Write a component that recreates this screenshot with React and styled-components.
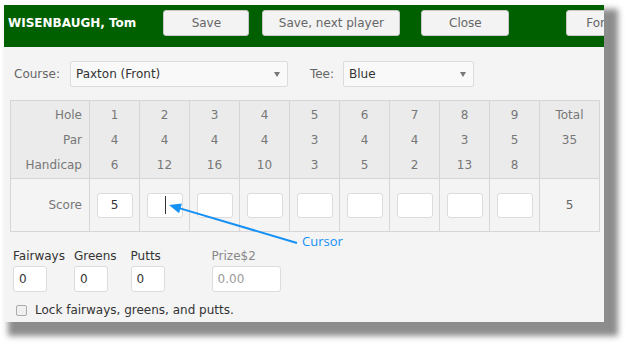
import styled, { createGlobalStyle } from "styled-components";

const GlobalStyle = createGlobalStyle`
    html, body {
        margin: 0;
        padding: 0;
        background: #ffffff;
    }
    body {
        font-family: "DejaVu Sans", Verdana, sans-serif;
        font-size: 12px;
        color: #333;
    }
`;

const Page = styled.div`
    padding: 5px 0 0 4px;
    width: 626px;
    height: 344px;
    box-sizing: border-box;
`;

const Window = styled.div`
    position: relative;
    width: 600px;
    height: 317px;
    background: #f4f4f4;
    overflow: hidden;
    box-shadow: 9px 9px 6px 5px rgba(0, 0, 0, 0.45);
`;

const Header = styled.div`
    display: flex;
    align-items: flex-start;
    height: 42px;
    box-sizing: border-box;
    padding: 5px 0 0 4px;
    background: #006000;
    white-space: nowrap;
    overflow: hidden;
`;

const PlayerName = styled.div`
    height: 26px;
    line-height: 26px;
    color: #ffffff;
    font-weight: bold;
    font-size: 12px;
`;

const HeaderButton = styled.div`
    flex: none;
    width: ${(p) => p.$w}px;
    height: 26px;
    margin-left: ${(p) => p.$ml}px;
    box-sizing: border-box;
    border: 1px solid #c8c8c8;
    border-radius: 3px;
    background: #f3f3f3;
    color: #666;
    font-size: 12px;
    line-height: 24px;
    text-align: center;
`;

const Content = styled.div`
    padding: 14px 6px 0 6px;
`;

const SelectRow = styled.div`
    display: flex;
    align-items: center;
    height: 26px;
`;

const FieldLabel = styled.span`
    color: #666;
    margin-left: ${(p) => p.$ml}px;
    margin-right: ${(p) => p.$mr}px;
`;

const FakeSelect = styled.div`
    position: relative;
    width: ${(p) => p.$w}px;
    height: 26px;
    box-sizing: border-box;
    border: 1px solid #dcdcdc;
    border-radius: 2px;
    background: #f9f9f9;
    padding-left: 5px;
    line-height: 24px;
    color: #333;

    &::after {
        content: "";
        position: absolute;
        right: 7px;
        top: 10px;
        border-left: 3px solid transparent;
        border-right: 3px solid transparent;
        border-top: 5px solid #777;
    }
`;

const Grid = styled.table`
    margin-top: 13px;
    width: 589px;
    table-layout: fixed;
    border-collapse: collapse;
    border: 1px solid #d6d6d6;
    color: #777;
    font-size: 12px;
`;

const HeadRow = styled.tr`
    background: #ebebeb;
    height: ${(p) => p.$h}px;
`;

const ScoreRow = styled.tr`
    background: #f4f4f4;
    height: 53px;
    border-top: 1px solid #d6d6d6;
`;

const Cell = styled.td`
    padding: 0;
    border-left: 1px solid #d6d6d6;
    text-align: center;
    vertical-align: middle;
    padding-top: ${(p) => p.$pt || 0}px;
`;

const RowLabel = styled(Cell)`
    text-align: right;
    padding-right: 7px;
`;

const ScoreWrap = styled.div`
    position: relative;
    width: 36px;
    height: 25px;
    margin: 0 auto;
`;

const ScoreInput = styled.input`
    display: block;
    width: 36px;
    height: 25px;
    box-sizing: border-box;
    border: 1px solid #dcdcdc;
    border-radius: 3px;
    background: #ffffff;
    padding: 0;
    text-align: center;
    font-family: "DejaVu Sans", Verdana, sans-serif;
    font-size: 12px;
    color: #333;
    outline: none;
`;

const Caret = styled.span`
    position: absolute;
    left: 18px;
    top: 3px;
    width: 1px;
    height: 18px;
    background: #333;
`;

const Extras = styled.div`
    display: flex;
    margin-top: 17px;
`;

const ExtraField = styled.div`
    display: flex;
    flex-direction: column;
    margin-left: ${(p) => p.$ml}px;
    margin-right: ${(p) => p.$mr}px;
`;

const ExtraLabel = styled.span`
    height: 15px;
    line-height: 15px;
    color: ${(p) => (p.$muted ? "#888" : "#333")};
    white-space: nowrap;
`;

const ExtraInput = styled.input`
    width: ${(p) => p.$w}px;
    height: 26px;
    margin-top: 2px;
    box-sizing: border-box;
    border: 1px solid #dcdcdc;
    border-radius: 3px;
    background: #ffffff;
    padding: 0 5px;
    font-family: "DejaVu Sans", Verdana, sans-serif;
    font-size: 12px;
    color: #333;
    outline: none;

    &::placeholder {
        color: #999;
    }
`;

const LockRow = styled.label`
    display: flex;
    align-items: center;
    margin-top: 10px;
    padding-left: 6px;
    height: 16px;
    color: #333;
`;

const Box = styled.span`
    width: 11px;
    height: 11px;
    box-sizing: border-box;
    border: 1px solid #aaa;
    border-radius: 2px;
    background: #f0f0f0;
    margin-right: 8px;
`;

const Annotation = styled.svg`
    position: absolute;
    left: 0;
    top: 0;
    pointer-events: none;
`;

const Callout = styled.span`
    position: absolute;
    left: 298px;
    top: 227px;
    font-family: "Open Sans", sans-serif;
    font-size: 13px;
    color: #1590f5;
`;

const holes = [
    { hole: 1, par: 4, hcp: 6 },
    { hole: 2, par: 4, hcp: 12 },
    { hole: 3, par: 4, hcp: 16 },
    { hole: 4, par: 4, hcp: 10 },
    { hole: 5, par: 3, hcp: 3 },
    { hole: 6, par: 4, hcp: 5 },
    { hole: 7, par: 4, hcp: 2 },
    { hole: 8, par: 3, hcp: 13 },
    { hole: 9, par: 5, hcp: 8 },
];

const App = () => {
    return (
        <Page>
            <GlobalStyle />
            <Window>
                <Header>
                    <PlayerName>WISENBAUGH, Tom</PlayerName>
                    <HeaderButton $w={86} $ml={27}>Save</HeaderButton>
                    <HeaderButton $w={138} $ml={13}>Save, next player</HeaderButton>
                    <HeaderButton $w={88} $ml={21}>Close</HeaderButton>
                    <HeaderButton $w={88} $ml={57}>Forward</HeaderButton>
                </Header>

                <Content>
                    <SelectRow>
                        <FieldLabel $ml={4} $mr={10}>Course:</FieldLabel>
                        <FakeSelect $w={218}>Paxton (Front)</FakeSelect>
                        <FieldLabel $ml={22} $mr={9}>Tee:</FieldLabel>
                        <FakeSelect $w={131}>Blue</FakeSelect>
                    </SelectRow>

                    <Grid>
                        <colgroup>
                            <col style={{ width: 79 }} />
                            {holes.map((h) => (
                                <col key={h.hole} style={{ width: 50 }} />
                            ))}
                            <col style={{ width: 60 }} />
                        </colgroup>
                        <tbody>
                            <HeadRow $h={27}>
                                <RowLabel $pt={2}>Hole</RowLabel>
                                {holes.map((h) => (
                                    <Cell key={h.hole} $pt={2}>{h.hole}</Cell>
                                ))}
                                <Cell $pt={2}>Total</Cell>
                            </HeadRow>
                            <HeadRow $h={24}>
                                <RowLabel>Par</RowLabel>
                                {holes.map((h) => (
                                    <Cell key={h.hole}>{h.par}</Cell>
                                ))}
                                <Cell>35</Cell>
                            </HeadRow>
                            <HeadRow $h={27}>
                                <RowLabel>Handicap</RowLabel>
                                {holes.map((h) => (
                                    <Cell key={h.hole}>{h.hcp}</Cell>
                                ))}
                                <Cell></Cell>
                            </HeadRow>
                            <ScoreRow>
                                <RowLabel>Score</RowLabel>
                                {holes.map((h) => (
                                    <Cell key={h.hole}>
                                        <ScoreWrap>
                                            <ScoreInput readOnly value={h.hole === 1 ? "5" : ""} />
                                            {h.hole === 2 && <Caret />}
                                        </ScoreWrap>
                                    </Cell>
                                ))}
                                <Cell style={{ color: "#666" }}>5</Cell>
                            </ScoreRow>
                        </tbody>
                    </Grid>

                    <Extras>
                        <ExtraField $ml={3} $mr={9}>
                            <ExtraLabel>Fairways</ExtraLabel>
                            <ExtraInput $w={34} readOnly value="0" />
                        </ExtraField>
                        <ExtraField $ml={0} $mr={14}>
                            <ExtraLabel>Greens</ExtraLabel>
                            <ExtraInput $w={34} readOnly value="0" />
                        </ExtraField>
                        <ExtraField $ml={0} $mr={47}>
                            <ExtraLabel>Putts</ExtraLabel>
                            <ExtraInput $w={34} readOnly value="0" />
                        </ExtraField>
                        <ExtraField $ml={0} $mr={0}>
                            <ExtraLabel $muted>Prize$2</ExtraLabel>
                            <ExtraInput $w={69} readOnly placeholder="0.00" />
                        </ExtraField>
                    </Extras>

                    <LockRow>
                        <Box />
                        Lock fairways, greens, and putts.
                    </LockRow>
                </Content>

                <Annotation width="600" height="317">
                    <line x1="293" y1="238" x2="176" y2="203.4" stroke="#1590f5" strokeWidth="2" />
                    <polygon points="165,200 175.1,208.2 177.9,198.6" fill="#1590f5" />
                </Annotation>
                <Callout>Cursor</Callout>
            </Window>
        </Page>
    );
};

export default App;
